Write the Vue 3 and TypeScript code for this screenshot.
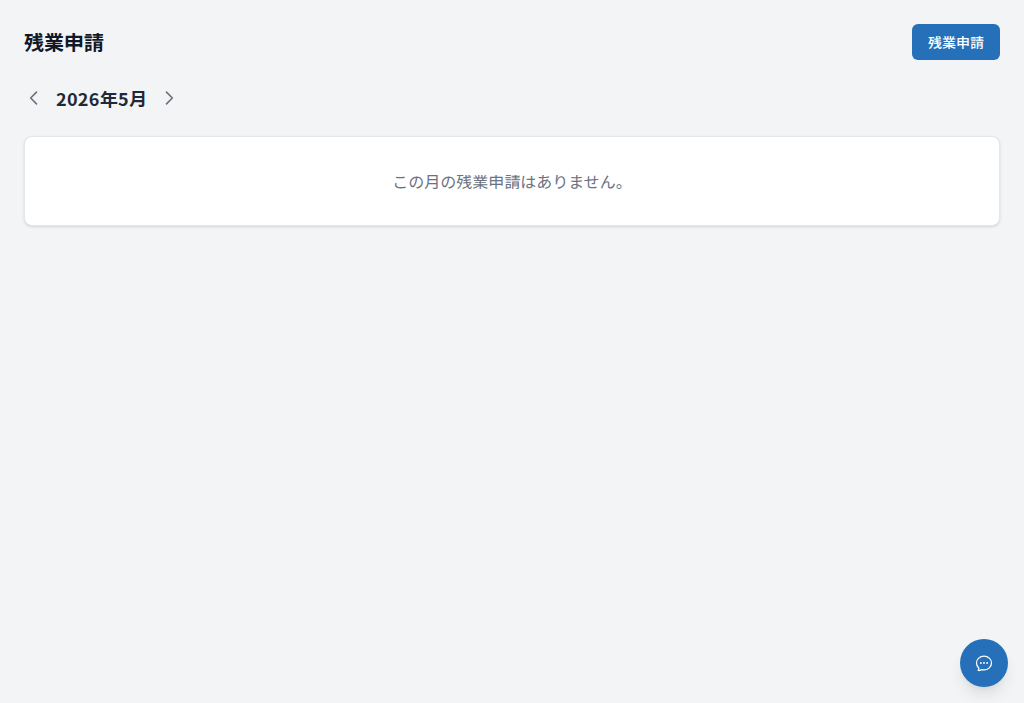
<script setup lang="ts">
const title = '残業申請'
const monthLabel = '2026年5月'
</script>

<template>
  <div class="page">
    <header class="head">
      <h1 class="title">{{ title }}</h1>
      <button class="primary" type="button">{{ title }}</button>
    </header>
    <nav class="month">
      <button class="arrow" type="button" aria-label="前月">
        <svg viewBox="0 0 24 24" width="20" height="20" fill="none" stroke="currentColor" stroke-width="2" stroke-linecap="round" stroke-linejoin="round"><path d="M15 19l-7-7 7-7" /></svg>
      </button>
      <span class="label">{{ monthLabel }}</span>
      <button class="arrow" type="button" aria-label="翌月">
        <svg viewBox="0 0 24 24" width="20" height="20" fill="none" stroke="currentColor" stroke-width="2" stroke-linecap="round" stroke-linejoin="round"><path d="M9 5l7 7-7 7" /></svg>
      </button>
    </nav>
    <section class="card">
      <p class="empty">この月の残業申請はありません。</p>
    </section>
    <button class="fab" type="button" aria-label="チャット">
      <svg viewBox="0 0 24 24" width="20" height="20" fill="none" stroke="currentColor" stroke-width="1.5" stroke-linecap="round" stroke-linejoin="round">
        <path d="M8.625 12a.375.375 0 1 1-.75 0 .375.375 0 0 1 .75 0Zm0 0H8.250m4.125 0a.375.375 0 1 1-.75 0 .375.375 0 0 1 .75 0Zm0 0H12m4.125 0a.375.375 0 1 1-.75 0 .375.375 0 0 1 .75 0Zm0 0h-.375M21 12c0 4.556-4.030 8.250-9 8.250a9.764 9.764 0 0 1-2.555-.337A5.972 5.972 0 0 1 5.410 20.970a5.969 5.969 0 0 1-.474-.065 4.480 4.480 0 0 0 .978-2.025c.09-.457-.133-.901-.467-1.226C3.930 16.178 3 14.189 3 12c0-4.556 4.030-8.250 9-8.250s9 3.694 9 8.250Z" />
      </svg>
    </button>
  </div>
</template>

<style>
html, body { margin: 0; background: #f3f4f6; }
</style>

<style scoped>
.page {
  min-height: 703px;
  box-sizing: border-box;
  padding: 24px;
  background: #f3f4f6;
  font-family: "Noto Sans JP", "Noto Sans CJK JP", sans-serif;
  color: #111827;
}
.head {
  display: flex;
  align-items: center;
  justify-content: space-between;
  margin-bottom: 20px;
}
.title {
  margin: 0;
  font-size: 20px;
  line-height: 28px;
  font-weight: 700;
}
.primary {
  height: 36px;
  padding: 0 16px;
  border: 0;
  border-radius: 6px;
  background: #2570b8;
  color: #fff;
  font: inherit;
  font-size: 14px;
  font-weight: 500;
}
.month {
  display: flex;
  align-items: center;
  gap: 12px;
  margin-bottom: 20px;
  height: 36px;
}
.arrow {
  display: flex;
  align-items: center;
  justify-content: center;
  width: 20px;
  height: 28px;
  padding: 0;
  border: 0;
  background: transparent;
  color: #6b7280;
}
.label {
  font-size: 18px;
  line-height: 28px;
  font-weight: 700;
  letter-spacing: 0.3px;
  color: #1f2937;
}
.card {
  background: #fff;
  border: 1px solid #e5e7eb;
  border-radius: 8px;
  box-shadow: 0 1px 3px rgba(0, 0, 0, 0.1), 0 1px 2px -1px rgba(0, 0, 0, 0.1);
  padding: 32px;
  text-align: center;
}
.empty {
  margin: 0;
  font-size: 16px;
  line-height: 24px;
  color: #6b7280;
}
.fab {
  position: fixed;
  right: 16px;
  bottom: 16px;
  width: 48px;
  height: 48px;
  display: flex;
  align-items: center;
  justify-content: center;
  padding: 0;
  border: 0;
  border-radius: 50%;
  background: #2570b8;
  color: #fff;
  box-shadow: 0 10px 15px -3px rgba(0, 0, 0, 0.1), 0 4px 6px -4px rgba(0, 0, 0, 0.1);
}
</style>
